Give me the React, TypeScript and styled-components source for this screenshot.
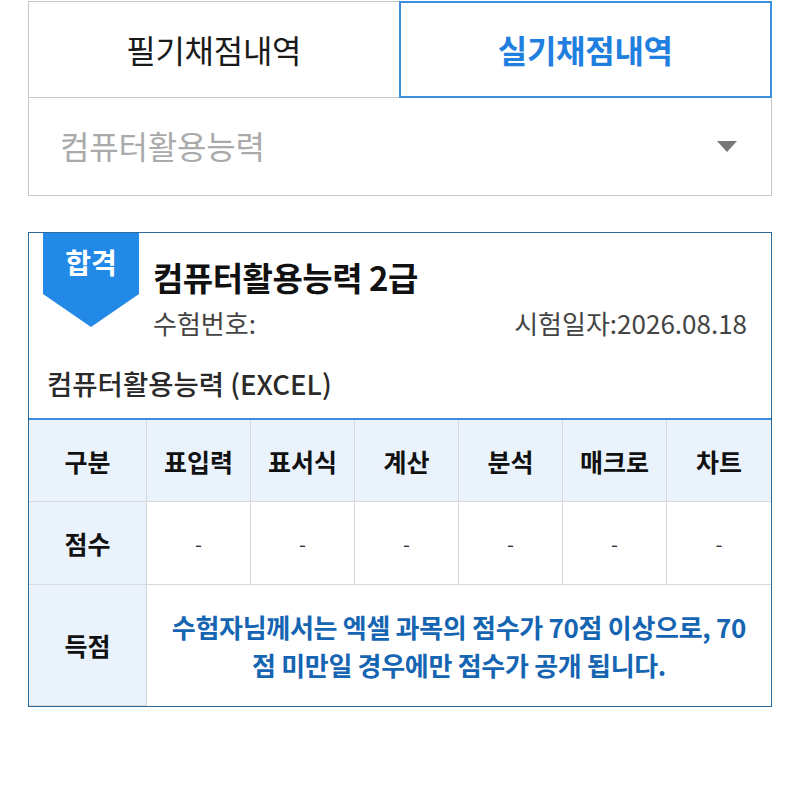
import styled, { createGlobalStyle } from "styled-components";

const GlobalStyle = createGlobalStyle`
  body {
    margin: 0;
    background: #fff;
    font-family: "Noto Sans CJK KR", "Noto Sans", sans-serif;
    color: #222;
  }
`;

const Page = styled.div`
  padding: 1px 28px 0;
  width: 744px;
`;

const Tabs = styled.div`
  display: flex;
`;

const Tab = styled.div<{ $active?: boolean }>`
  flex: 1;
  height: 97px;
  box-sizing: border-box;
  display: flex;
  align-items: center;
  justify-content: center;
  padding-bottom: 1px;
  font-size: 32px;
  font-weight: ${(p) => (p.$active ? 700 : 400)};
  color: ${(p) => (p.$active ? "#1f80e0" : "#1a1a1a")};
  border: ${(p) => (p.$active ? "2px solid #3b8fdc" : "1px solid #c8c8c8")};
  border-right: ${(p) => (p.$active ? "2px solid #3b8fdc" : "none")};
  letter-spacing: -0.3px;
`;

const Select = styled.div`
  height: 98px;
  box-sizing: border-box;
  border: 1px solid #c8c8c8;
  border-top: none;
  display: flex;
  align-items: center;
  justify-content: space-between;
  padding: 0 34px 4px 31px;
  font-size: 32px;
  color: #aaa;
  letter-spacing: -0.2px;
`;

const Caret = styled.span`
  width: 0;
  height: 0;
  border-left: 10px solid transparent;
  border-right: 10px solid transparent;
  border-top: 11px solid #777;
  margin-top: 4px;
`;

const Card = styled.section`
  margin-top: 36px;
  border: 1.5px solid #2b6a9c;
  position: relative;
`;

const Badge = styled.div`
  position: absolute;
  left: 14px;
  top: 0;
  width: 96px;
  height: 94px;
  background: #2389e6;
  clip-path: polygon(0 0, 100% 0, 100% 65%, 50% 100%, 0 65%);
  color: #fff;
  font-size: 28px;
  font-weight: 700;
  display: flex;
  justify-content: center;
  padding-top: 9px;
  box-sizing: border-box;
`;

const Head = styled.div`
  padding: 22px 24px 0 124px;
`;

const Title = styled.h2`
  margin: 0;
  font-size: 33px;
  font-weight: 700;
  line-height: 44px;
  color: #111;
  letter-spacing: -0.5px;
`;

const InfoRow = styled.div`
  display: flex;
  justify-content: space-between;
  margin-top: 4px;
  font-size: 26px;
  line-height: 40px;
  color: #444;
`;

const Subject = styled.div`
  padding: 21px 18px 16px;
  font-size: 27.5px;
  font-weight: 500;
  line-height: 38px;
  color: #2a2a2a;
`;

const Table = styled.div`
  display: grid;
  grid-template-columns: 118px repeat(6, 1fr);
  grid-template-rows: 82px 83px 121px;
  border-top: 2.5px solid #3a8ee0;
`;

const Cell = styled.div<{ $head?: boolean; $span?: number }>`
  display: flex;
  align-items: center;
  justify-content: center;
  text-align: center;
  background: ${(p) => (p.$head ? "#eaf3fc" : "#fff")};
  border-right: 1px solid #d9d9d9;
  border-bottom: 1px solid #d9d9d9;
  font-size: ${(p) => (p.$head ? "25px" : "20px")};
  font-weight: ${(p) => (p.$head ? 700 : 400)};
  color: ${(p) => (p.$head ? "#111" : "#333")};
  grid-column: ${(p) => (p.$span ? `span ${p.$span}` : "auto")};
  &:nth-child(7n) {
    border-right: none;
  }
  &:last-child {
    border-right: none;
    border-bottom: none;
  }
`;

const Note = styled.p`
  margin: 0;
  padding: 0 10px;
  font-size: 26px;
  font-weight: 700;
  line-height: 38px;
  color: #1565b2;
  letter-spacing: -0.3px;
`;

const columns = ["표입력", "표서식", "계산", "분석", "매크로", "차트"];

export default function App() {
  return (
    <Page>
      <GlobalStyle />
      <Tabs>
        <Tab>필기채점내역</Tab>
        <Tab $active>실기채점내역</Tab>
      </Tabs>
      <Select>
        <span>컴퓨터활용능력</span>
        <Caret />
      </Select>
      <Card>
        <Badge>합격</Badge>
        <Head>
          <Title>컴퓨터활용능력 2급</Title>
          <InfoRow>
            <span>수험번호:</span>
            <span>시험일자:2026.08.18</span>
          </InfoRow>
        </Head>
        <Subject>컴퓨터활용능력 (EXCEL)</Subject>
        <Table>
          <Cell $head>구분</Cell>
          {columns.map((c) => (
            <Cell $head key={c}>
              {c}
            </Cell>
          ))}
          <Cell $head>점수</Cell>
          {columns.map((c) => (
            <Cell key={c}>-</Cell>
          ))}
          <Cell $head>득점</Cell>
          <Cell $span={6}>
            <Note>
              수험자님께서는 엑셀 과목의 점수가 70점 이상으로, 70
              <br />점 미만일 경우에만 점수가 공개 됩니다.
            </Note>
          </Cell>
        </Table>
      </Card>
    </Page>
  );
}
